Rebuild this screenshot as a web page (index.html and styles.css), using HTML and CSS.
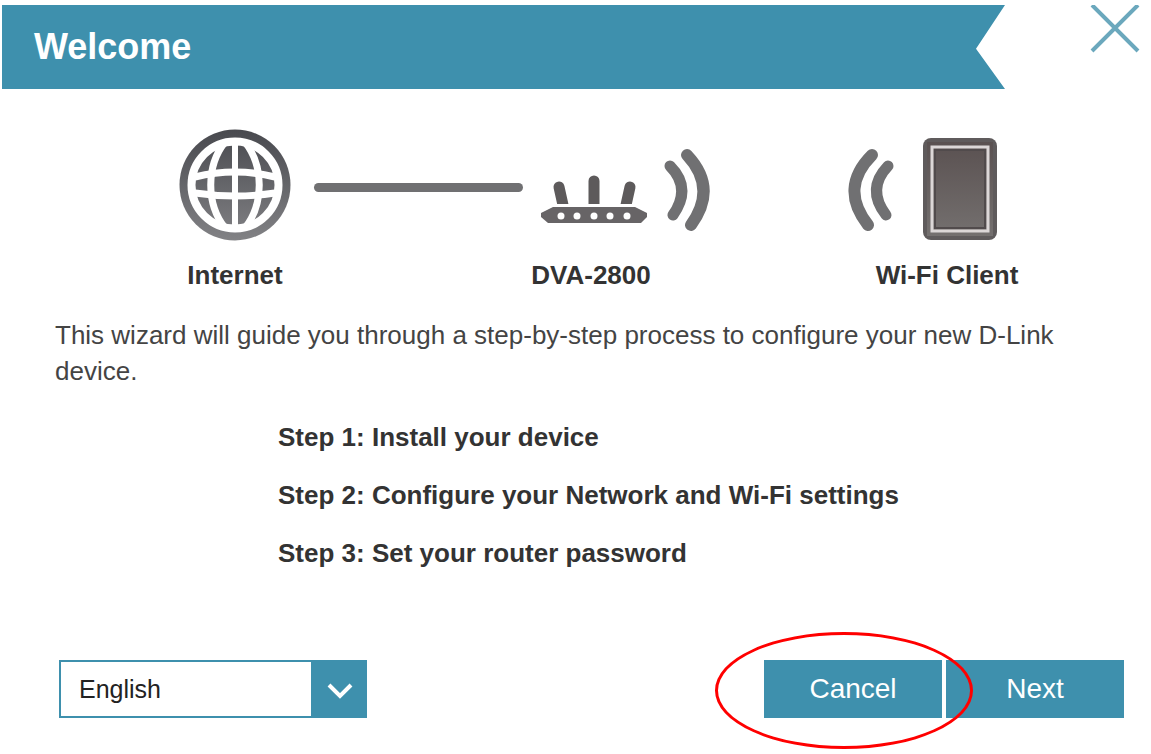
FILE: index.html
```html
<!DOCTYPE html>
<html lang="en">
<head>
    <meta charset="UTF-8">
    <meta name="viewport" content="width=device-width, initial-scale=1.0">
    <title>Welcome</title>
    <link rel="stylesheet" href="styles.css">
</head>
<body>
    <header class="header">
        <h1 class="banner">Welcome</h1>
        <button class="close" type="button" aria-label="Close">
            <svg width="50" height="50" viewBox="0 0 50 50">
                <path d="M2 0L48 46M48 0L2 46" fill="none" stroke="#6ba8bd" stroke-width="4"/>
            </svg>
        </button>
    </header>

    <main class="content">
        <!-- Internet -> router -> client -->
        <div class="diagram">
            <figure class="node internet">
                <svg width="112" height="112" viewBox="0 0 112 112">
                    <defs>
                        <linearGradient id="globeFill" x1="0" y1="0" x2="0" y2="1">
                            <stop offset="0" stop-color="#48494e"/>
                            <stop offset="1" stop-color="#828285"/>
                        </linearGradient>
                    </defs>
                    <circle cx="56" cy="56" r="55.500" fill="url(#globeFill)"/>
                    <g fill="none" stroke="#fff">
                        <circle cx="56" cy="56" r="43.500" stroke-width="8"/>
                        <path d="M56 12V100" stroke-width="6"/>
                        <path d="M46 13C27 37 27 75 46 99M66 13C85 37 85 75 66 99" stroke-width="7"/>
                        <path d="M16 48Q56 38 96 48M16 64Q56 70 96 64" stroke-width="7"/>
                    </g>
                </svg>
                <figcaption>Internet</figcaption>
            </figure>
            <div class="wire"></div>
            <figure class="node router">
                <svg width="106" height="112" viewBox="0 0 106 112">
                    <g stroke="#5d5a5b" stroke-width="11" stroke-linecap="round">
                        <path d="M18 58L22 76M53 52V76M89 58L85 76"/>
                    </g>
                    <path d="M8 75H98V83H8Z" fill="#fff"/>
                    <path d="M12 78H94L106 84V88L100 94H7L0 88V84Z" fill="#676466"/>
                    <g fill="#fff">
                        <circle cx="20" cy="87" r="3.500"/>
                        <circle cx="36" cy="87" r="3.500"/>
                        <circle cx="53" cy="87" r="3.500"/>
                        <circle cx="69" cy="87" r="3.500"/>
                        <circle cx="86" cy="87" r="3.500"/>
                    </g>
                </svg>
                <figcaption>DVA-2800</figcaption>
            </figure>
            <svg class="waves" width="48" height="112" viewBox="0 0 48 112">
                <g fill="none" stroke="#707072" stroke-width="12" stroke-linecap="round">
                    <path d="M7 37Q29 59 10 86" stroke-width="11"/>
                    <path d="M24 26Q55 59 28 96"/>
                </g>
            </svg>
            <figure class="node client">
                <svg width="150" height="112" viewBox="0 0 150 112">
                    <defs>
                        <linearGradient id="screenFill" x1="0" y1="0" x2="0" y2="1">
                            <stop offset="0" stop-color="#5a5151"/>
                            <stop offset="1" stop-color="#74706f"/>
                        </linearGradient>
                    </defs>
                    <g fill="none" stroke="#707072" stroke-width="12" stroke-linecap="round">
                        <path d="M24 26Q-9 59 20 96"/>
                        <path d="M40 37Q18 60 38 86" stroke-width="11"/>
                    </g>
                    <rect x="75" y="9" width="74" height="102" rx="8" fill="#5f5b5c"/>
                    <rect x="79" y="13" width="66" height="94" fill="url(#screenFill)"/>
                    <rect x="84" y="18" width="56" height="84" fill="none" stroke="#dcd7d7" stroke-width="3"/>
                    <rect x="87" y="21" width="50" height="78" fill="none" stroke="#514b4c" stroke-width="2"/>
                </svg>
                <figcaption>Wi-Fi Client</figcaption>
            </figure>
        </div>

        <p class="intro">This wizard will guide you through a step-by-step process to configure your new D-Link device.</p>

        <ul class="steps">
            <li>Step 1: Install your device</li>
            <li>Step 2: Configure your Network and Wi-Fi settings</li>
            <li>Step 3: Set your router password</li>
        </ul>
    </main>

    <footer class="footer">
        <div class="language">
            <select aria-label="Language">
                <option>English</option>
            </select>
            <svg class="arrow" width="56" height="58" viewBox="0 0 56 58">
                <path d="M18 25L29 36L40 25" fill="none" stroke="#fff" stroke-width="4"/>
            </svg>
        </div>
        <div class="buttons">
            <div class="marked">
                <button class="btn" type="button">Cancel</button>
                <span class="ring"></span>
            </div>
            <button class="btn" type="button">Next</button>
        </div>
    </footer>
</body>
</html>
```
FILE: styles.css
```css
*{
    box-sizing: border-box;
    margin: 0;
    padding: 0;
}
body{
    font-family: "Liberation Sans", Arial, sans-serif;
    font-size: 26px;
    color: #333;
    background: #fff;
}

.header{
    display: flex;
    justify-content: space-between;
    align-items: flex-start;
    padding: 5px 11px 0 2px;
}
.banner{
    flex: 1;
    margin-right: 85px;
    padding-left: 32px;
    font-size: 36px;
    line-height: 84px;
    color: #fff;
    background: #3e90ad;
    clip-path: polygon(0 0, 100% 0, calc(100% - 29px) 52%, 100% 100%, 0 100%);
}
.close{
    border: none;
    background: none;
    cursor: pointer;
}
.close svg{
    display: block;
}

.diagram{
    display: flex;
    align-items: flex-start;
    padding: 40px 105px 0 179px;
}
.node figcaption{
    margin-top: 16px;
    line-height: 36px;
    font-weight: bold;
    text-align: center;
    white-space: nowrap;
}
.node svg{
    display: block;
}
.internet{
    width: 112px;
}
.wire{
    flex: 1;
    height: 9px;
    margin: 54px 8px 0 23px;
    border-radius: 5px;
    background: #707072;
}
.router{
    width: 120px;
}
.router svg{
    margin-left: 10px;
}
.waves{
    margin-left: 12px;
}
.client{
    width: 198px;
    margin-left: 137px;
}

.intro{
    padding: 24px 55px 0;
    line-height: 36px;
    color: #444;
}
.steps{
    display: flex;
    flex-direction: column;
    gap: 22px;
    padding: 30px 0 0 278px;
    list-style: none;
    font-weight: bold;
    line-height: 36px;
}

.footer{
    display: flex;
    justify-content: space-between;
    padding: 89px 27px 36px 59px;
}
.language{
    position: relative;
    width: 308px;
}
.language select{
    width: 100%;
    height: 58px;
    padding: 0 60px 0 18px;
    border: 2px solid #3e90ad;
    border-radius: 0;
    font-family: inherit;
    font-size: 25px;
    color: #222;
    background: #fff;
    appearance: none;
}
.arrow{
    position: absolute;
    top: 0;
    right: 0;
    background: #3e90ad;
    pointer-events: none;
}
.buttons{
    display: flex;
    gap: 4px;
}
.btn{
    width: 178px;
    height: 58px;
    border: none;
    font-family: inherit;
    font-size: 28px;
    color: #fff;
    background: #3e90ad;
    cursor: pointer;
}
/* red ring drawn over the Cancel button */
.marked{
    position: relative;
}
.ring{
    position: absolute;
    top: -28px;
    left: -49px;
    width: 258px;
    height: 117px;
    border: 3px solid #f00;
    border-radius: 50%;
    pointer-events: none;
}
```
